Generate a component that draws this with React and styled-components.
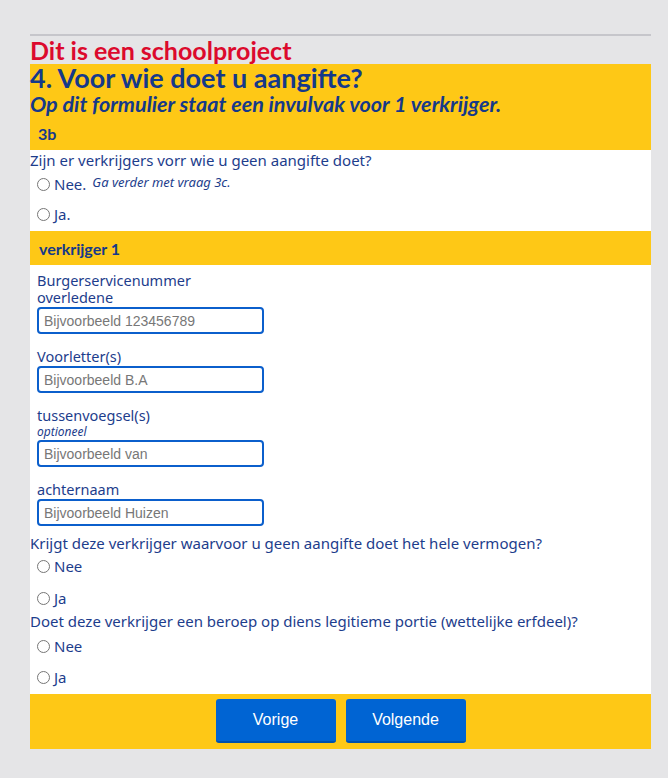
import React from "react";
import styled, { createGlobalStyle } from "styled-components";

const GlobalStyle = createGlobalStyle`
  html, body { margin: 0; padding: 0; background: #e5e5e7; }
  body { font-family: "Noto Sans", "Open Sans", sans-serif; }
  * { box-sizing: border-box; }
`;

const Page = styled.div`
  padding: 34px 17px 29px 30px;
`;

const Container = styled.div`
  width: 621px;
  border-top: 2px solid #c6c6cb;
`;

const SiteTitle = styled.div`
  color: #dc0a2d;
  font-family: "Lato", "Noto Sans", sans-serif;
  font-weight: 700;
  font-size: 25px;
  line-height: 28px;
  white-space: nowrap;
`;

const YellowBlock = styled.div`
  background: #fec816;
  color: #15398a;
`;

const Heading = styled.h1`
  margin: 0;
  font-family: "Lato", "Noto Sans", sans-serif;
  font-weight: 700;
  font-size: 27px;
  line-height: 28px;
  white-space: nowrap;
`;

const Subtitle = styled.h2`
  margin: 0;
  font-family: "Lato", "Noto Sans", sans-serif;
  font-style: italic;
  font-weight: 700;
  font-size: 21.6px;
  line-height: 24px;
  white-space: nowrap;
`;

const SectionBar = styled.div`
  display: flex;
  align-items: center;
  height: ${(p) => p.$h}px;
  padding-left: ${(p) => p.$pad}px;
  font-family: "Lato", "Noto Sans", sans-serif;
  font-weight: 700;
  font-size: 16px;
`;

const Body = styled.div`
  background: #fff;
  color: #1d3d8c;
  font-size: 15px;
`;

const Question = styled.div`
  line-height: 20px;
  height: 20px;
  white-space: nowrap;
`;

const RadioGroup = styled.div`
  display: flex;
  flex-direction: column;
  gap: ${(p) => p.$gap}px;
  padding-top: ${(p) => p.$top}px;
  padding-bottom: ${(p) => p.$bottom}px;
`;

const RadioRow = styled.label`
  display: flex;
  align-items: center;
  height: 24px;
  padding-left: 7px;
  gap: 4px;
`;

const Radio = styled.input.attrs({ type: "radio" })`
  width: 13px;
  height: 13px;
  margin: 0;
  accent-color: #1d3d8c;
`;

const Hint = styled.span`
  font-style: italic;
  font-size: 13px;
  margin-left: 2px;
  position: relative;
  top: -2px;
`;

const Fields = styled.div`
  padding: 7px 0 7px 7px;
  display: flex;
  flex-direction: column;
  gap: 14px;
`;

const Field = styled.div`
  display: flex;
  flex-direction: column;
`;

const Label = styled.div`
  line-height: 17px;
  font-size: 14.5px;
`;

const Note = styled.div`
  font-style: italic;
  font-size: 12px;
  line-height: 15px;
`;

const Input = styled.input`
  margin-top: 1px;
  width: 227px;
  height: 27px;
  border: 2px solid #0b5fcc;
  border-radius: 4px;
  padding: 0 5px;
  font-family: "Liberation Sans", Arial, sans-serif;
  font-size: 14px;
  color: #333;
  &::placeholder { color: #777; }
`;

const Footer = styled.div`
  background: #fec816;
  height: 55px;
  display: flex;
  justify-content: center;
  align-items: flex-start;
  gap: 10px;
  padding-top: 5px;
`;

const Button = styled.button`
  width: 120px;
  height: 44px;
  border: none;
  border-bottom: 2px solid #0051ad;
  border-radius: 3px;
  background: #0064d3;
  color: #fff;
  font-family: "Liberation Sans", Arial, sans-serif;
  font-size: 16px;
  cursor: pointer;
`;

const RadioChoice = ({ name, label, hint }) => (
  <RadioRow>
    <Radio name={name} />
    <span>{label}</span>
    {hint && <Hint>{hint}</Hint>}
  </RadioRow>
);

export default function App() {
  return (
    <>
      <GlobalStyle />
      <Page>
        <Container>
          <SiteTitle>Dit is een schoolproject</SiteTitle>
          <YellowBlock>
            <Heading>4. Voor wie doet u aangifte?</Heading>
            <Subtitle>Op dit formulier staat een invulvak voor 1 verkrijger.</Subtitle>
            <SectionBar $h={34} $pad={8}>3b</SectionBar>
          </YellowBlock>
          <Body>
            <Question>Zijn er verkrijgers vorr wie u geen aangifte doet?</Question>
            <RadioGroup $gap={6} $top={2} $bottom={5}>
              <RadioChoice name="q1" label="Nee." hint="Ga verder met vraag 3c." />
              <RadioChoice name="q1" label="Ja." />
            </RadioGroup>
          </Body>
          <YellowBlock>
            <SectionBar $h={34} $pad={9}>verkrijger 1</SectionBar>
          </YellowBlock>
          <Body>
            <Fields>
              <Field>
                <Label>Burgerservicenummer<br />overledene</Label>
                <Input placeholder="Bijvoorbeeld 123456789" />
              </Field>
              <Field>
                <Label>Voorletter(s)</Label>
                <Input placeholder="Bijvoorbeeld B.A" />
              </Field>
              <Field>
                <Label>tussenvoegsel(s)</Label>
                <Note>optioneel</Note>
                <Input placeholder="Bijvoorbeeld van" />
              </Field>
              <Field>
                <Label>achternaam</Label>
                <Input placeholder="Bijvoorbeeld Huizen" />
              </Field>
            </Fields>
            <Question>Krijgt deze verkrijger waarvoor u geen aangifte doet het hele vermogen?</Question>
            <RadioGroup $gap={8} $top={1} $bottom={1}>
              <RadioChoice name="q2" label="Nee" />
              <RadioChoice name="q2" label="Ja" />
            </RadioGroup>
            <Question>Doet deze verkrijger een beroep op diens legitieme portie (wettelijke erfdeel)?</Question>
            <RadioGroup $gap={7} $top={3} $bottom={5}>
              <RadioChoice name="q3" label="Nee" />
              <RadioChoice name="q3" label="Ja" />
            </RadioGroup>
          </Body>
          <Footer>
            <Button>Vorige</Button>
            <Button>Volgende</Button>
          </Footer>
        </Container>
      </Page>
    </>
  );
}
